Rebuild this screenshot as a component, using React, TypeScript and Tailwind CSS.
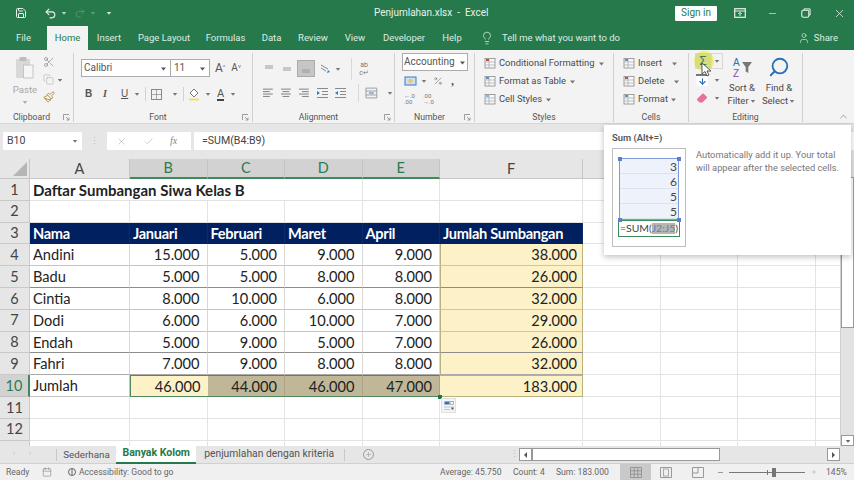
import React from "react";
import { Scissors, Copy, Paintbrush, Lightbulb, User, Search, Save, Undo2, Redo2, X, Check, Minus, ChevronUp, Plus, Percent, Eraser, ArrowDown, Calendar } from "lucide-react";

const ui = { fontFamily: 'Roboto,"Open Sans",sans-serif' };
const cal = { fontFamily: 'Lato,"Liberation Sans",sans-serif' };

const Chev = ({ c = "text-[#777]", s = 9 }: { c?: string; s?: number }) => (
  <svg width={s} height={s} viewBox="0 0 9 9" className={c + " shrink-0"}><path d="M2 3.5h5L4.5 6.5z" fill="currentColor" /></svg>
);
const Launcher = () => (
  <svg width="7" height="7" viewBox="0 0 7 7" className="text-[#888]"><path d="M.5 6V.5H6M3 3l3 3M6 3.5V6H3.5" fill="none" stroke="currentColor" strokeWidth=".8" /></svg>
);
const Lines = ({ kind }: { kind: "l" | "c" | "r" }) => {
  const w = [10, 7, 10, 7];
  return (
    <svg width="12" height="12" viewBox="0 0 12 12" className="text-[#8a8a8a]">
      {w.map((x, i) => {
        const x0 = kind === "l" ? 1 : kind === "c" ? 6 - x / 2 : 11 - x;
        return <rect key={i} x={x0} y={1.5 + i * 2.5} width={x} height="1.1" fill="currentColor" />;
      })}
    </svg>
  );
};
const Indent = ({ flip = false }: { flip?: boolean }) => (
  <svg width="13" height="12" viewBox="0 0 13 12" className="text-[#8a8a8a]">
    <path d="M1 1.5h11M6 4.5h6M6 7.5h6M1 10.5h11" stroke="currentColor" strokeWidth="1" />
    <path d={flip ? "M1 6l3-2v4z" : "M4 6L1 4v4z"} fill="#3b78c2" />
  </svg>
);
const VAlign = ({ y }: { y: number }) => (
  <svg width="12" height="12" viewBox="0 0 12 12" className="text-[#9a9a9a]">
    <path d={`M2 ${y}h8M2 ${y + 2}h8`} stroke="currentColor" strokeWidth="1" />
  </svg>
);
const SmallTable = ({ accent = "#c0504d" }: { accent?: string }) => (
  <svg width="13" height="13" viewBox="0 0 13 13">
    <rect x="1" y="1.5" width="10" height="9.5" fill="#f8f8f8" stroke="#8a8a8a" strokeWidth=".8" />
    <path d="M1 5h10M1 8h10M5 1.5V11" stroke="#a8a8a8" strokeWidth=".7" />
    <path d="M2 3l3 0" stroke={accent} strokeWidth="2" />
  </svg>
);

const Group = ({ w, label, launcher, children }: { w: string; label: string; launcher?: boolean; children: React.ReactNode }) => (
  <div className={w + " flex flex-col h-[69px] mt-[3px] border-r border-[#d0d0d0] shrink-0"}>
    <div className="flex-1 min-h-0">{children}</div>
    <div className="h-[9px] flex items-center text-[8.7px] leading-none text-[#555]">
      <span className="flex-1 text-center">{label}</span>
      {launcher && <span className="pr-[3px] flex"><Launcher /></span>}
    </div>
  </div>
);

const Row3 = ({ icon, text, chevGap }: { icon: React.ReactNode; text: string; chevGap: string }) => (
  <div className="h-[18px] flex items-center text-[9.4px] text-[#4a4a4a] leading-none">
    <span className="w-[14px] flex justify-center shrink-0">{icon}</span>
    <span className="ml-[2px] whitespace-nowrap">{text}</span>
    <span className={chevGap}><Chev /></span>
  </div>
);

const COLS = ["A", "B", "C", "D", "E", "F", "", "", "", ""];
const DATA: [string, string, string, string, string, string][] = [
  ["Andini", "15.000", "5.000", "9.000", "9.000", "38.000"],
  ["Badu", "5.000", "5.000", "8.000", "8.000", "26.000"],
  ["Cintia", "8.000", "10.000", "6.000", "8.000", "32.000"],
  ["Dodi", "6.000", "6.000", "10.000", "7.000", "29.000"],
  ["Endah", "5.000", "9.000", "5.000", "7.000", "26.000"],
  ["Fahri", "7.000", "9.000", "8.000", "8.000", "32.000"],
  ["Jumlah", "46.000", "44.000", "46.000", "47.000", "183.000"],
];
const HEAD = ["Nama", "Januari", "Februari", "Maret", "April", "Jumlah Sumbangan"];

function sheetCell(r: number, c: number) {
  const base = "min-w-0 whitespace-nowrap flex items-center pt-[2px] text-[14.6px] leading-none text-[#222] ";
  const grid = "border-r border-b border-[#e3e3e3] ";
  if (r === 1 && c === 0)
    return <div key={c} className={base + "border-b border-[#e3e3e3] pl-[3px] font-bold text-[15px] text-[#1a1a1a] overflow-visible"}>Daftar Sumbangan Siwa Kelas B</div>;
  if (r === 1 && c > 0 && c < 3) return <div key={c} className="border-b border-[#e3e3e3]" />;
  if (r === 3 && c < 6)
    return <div key={c} className={base + "bg-[#002060] text-white font-bold pl-[3px] tracking-[-0.3px] border-r border-[#0d2b66]"}>{HEAD[c]}</div>;
  if (r >= 4 && r <= 10 && c < 6) {
    const row = DATA[r - 4];
    const lineB = r === 5 || r === 8 ? "border-b border-[#8c8c8c] " : r === 9 ? "border-b border-[#aaa] " : "border-b border-[#c4c4c4] ";
    if (r === 10) {
      if (c === 0) return <div key={c} className={base + "pl-[3px] border-r border-b border-[#c4c4c4] bg-white"}>{row[c]}</div>;
      if (c === 1) return <div key={c} className={base + "justify-end pr-[7px] bg-[#fdf1c8] border-y border-l border-[#4f8a5f]"}>{row[c]}</div>;
      if (c < 5) return <div key={c} className={base + "justify-end pr-[7px] bg-[#bfb797] border-y border-r border-y-[#4f8a5f] border-r-[#aaa38a]"}>{row[c]}</div>;
      return <div key={c} className={base + "justify-end pr-[5px] bg-[#fdf1c8] border-y border-r border-y-[#b9b27e] border-r-[#b9b27e]"}>{row[c]}</div>;
    }
    if (c === 0) return <div key={c} className={base + lineB + "pl-[3px] border-r border-r-[#d8d8d8]"}>{row[c]}</div>;
    if (c === 5) return <div key={c} className={base + lineB + "justify-end pr-[5px] bg-[#fdf1c8] border-x border-x-[#b9b27e]"}>{row[c]}</div>;
    return <div key={c} className={base + lineB + "justify-end pr-[7px] border-r border-r-[#d8d8d8]"}>{row[c]}</div>;
  }
  return <div key={c} className={grid} />;
}

export default function App() {
  return (
    <div style={ui} className="w-[854px] h-[480px] overflow-hidden relative flex flex-col bg-[#e6e6e6] text-[#444]">
      {/* title bar */}
      <div className="h-[26px] bg-[#25794a] flex items-center text-[#e9f2ec] shrink-0">
        <span className="ml-[15px] flex"><Save size={12} strokeWidth={2} /></span>
        <span className="ml-[17px] flex"><Undo2 size={13} strokeWidth={2} /></span>
        <span className="ml-[3px] flex"><Chev c="text-[#b9d3c4]" s={8} /></span>
        <span className="ml-[6px] flex"><Redo2 size={12} strokeWidth={1.5} className="text-[#5d9c78]" /></span>
        <span className="ml-[3px] flex"><Chev c="text-[#5d9c78]" s={8} /></span>
        <span className="ml-[8px] flex"><Chev c="text-[#d2e3d9]" s={8} /></span>
        <span className="ml-[261px] w-[108px] whitespace-nowrap text-[10px] leading-none">Penjumlahan.xlsx&nbsp; -&nbsp; Excel</span>
        <span className="ml-[193px] w-[42px] h-[15px] bg-white text-[#25794a] rounded-[1px] flex items-center justify-center text-[10px] leading-none">Sign in</span>
        <svg width="12" height="10" viewBox="0 0 12 10" className="ml-[17px]"><rect x=".7" y=".7" width="10.6" height="8.6" fill="none" stroke="currentColor" strokeWidth="1.2" /><path d="M.7 3h10.6M6 8V4.5M4.3 6L6 4.3 7.7 6" fill="none" stroke="currentColor" /></svg>
        <span className="ml-[21px] flex"><Minus size={11} strokeWidth={1.4} /></span>
        <svg width="10" height="10" viewBox="0 0 10 10" className="ml-[23px]"><rect x=".8" y="2.2" width="7" height="7" rx="1.5" fill="none" stroke="currentColor" strokeWidth="1.1" /><path d="M3 2V.9h6.1V7H8" fill="none" stroke="currentColor" strokeWidth="1" /></svg>
        <span className="ml-[22px] flex"><X size={13} strokeWidth={1.4} /></span>
      </div>
      {/* tabs */}
      <div className="h-[24px] bg-[#25794a] flex items-center text-[#dfece4] text-[9.5px] leading-none shrink-0">
        {([["File", "w-[47px]"], ["Home", ""], ["Insert", "w-[42px]"], ["Page Layout", "w-[68px]"], ["Formulas", "w-[55px]"], ["Data", "w-[37px]"], ["Review", "w-[46px]"], ["View", "w-[38px]"], ["Developer", "w-[60px]"], ["Help", "w-[36px]"]] as [string, string][]).map(([t, w]) =>
          t === "Home" ? (
            <div key={t} className="w-[41px] h-[24px] bg-[#f3f3f3] text-[#25794a] flex items-center justify-center">{t}</div>
          ) : (
            <div key={t} className={w + " text-center whitespace-nowrap"}>{t}</div>
          )
        )}
        <span className="ml-[10px] flex"><Lightbulb size={14} strokeWidth={1.3} /></span>
        <span className="ml-[8px] whitespace-nowrap">Tell me what you want to do</span>
        <span className="flex-1" />
        <span className="flex"><User size={12} strokeWidth={1.3} /></span>
        <span className="ml-[4px] mr-[16px]">Share</span>
      </div>
      {/* ribbon */}
      <div className="h-[74px] bg-[#f3f3f3] flex shrink-0 border-b border-[#d6d6d6] relative">
        <Group w="w-[74px]" label="Clipboard" launcher>
          <div className="flex pl-[11px] pt-[3px]">
            <div className="w-[28px] flex flex-col items-center text-[#a8a8a8]">
              <svg width="20" height="23" viewBox="0 0 20 23"><rect x="1" y="3" width="14" height="19" rx="1" fill="#d8d8d8" /><rect x="4.5" y="1" width="7" height="4" rx="1" fill="#bdbdbd" /><path d="M8.5 9h9.5v13H8.5z" fill="#f6f6f6" stroke="#c4c4c4" /></svg>
              <span className="text-[9.6px] leading-none mt-[6px]">Paste</span>
              <span className="mt-[3px] flex"><Chev c="text-[#aaa]" s={8} /></span>
            </div>
            <div className="flex flex-col ml-[4px] gap-[4px]">
              <span className="flex"><Scissors size={12} strokeWidth={1.3} className="text-[#7d8693]" /></span>
              <span className="flex items-center mt-[2px]"><Copy size={11} strokeWidth={1.1} className="text-[#a6a6a6]" /><span className="ml-[2px]"><Chev s={8} /></span></span>
              <span className="flex mt-[2px]"><Paintbrush size={12} strokeWidth={1.8} className="text-[#b3873d]" /></span>
            </div>
          </div>
        </Group>
        <Group w="w-[179px]" label="Font" launcher>
          <div className="pl-[7px] pt-[6px] flex items-center">
            <div className="w-[90px] h-[18px] bg-white border border-[#ababab] flex items-center justify-between px-[2px] text-[10px] leading-none text-[#555]"><span>Calibri</span><Chev c="text-[#555]" /></div>
            <div className="w-[39px] h-[18px] bg-white border border-[#ababab] border-l-0 flex items-center justify-between pl-[3px] pr-[2px] text-[10px] leading-none text-[#555]"><span>11</span><Chev c="text-[#555]" /></div>
            <span className="ml-[5px] text-[12px] leading-none text-[#555]">A<sup className="text-[6px] text-[#3b78c2]">^</sup></span>
            <span className="ml-[6px] text-[10px] leading-none text-[#555]">A<sup className="text-[6px] text-[#3b78c2]">v</sup></span>
          </div>
          <div className="pl-[11px] pt-[8px] flex items-center text-[#555] h-[26px]">
            <b className="text-[10px] w-[18px] leading-none" style={{ fontFamily: '"Liberation Sans"' }}>B</b>
            <i className="text-[10px] w-[18px] leading-none font-bold" style={{ fontFamily: '"Liberation Serif"' }}>I</i>
            <u className="text-[10px] w-[12px] leading-none" style={{ fontFamily: '"Liberation Sans"' }}>U</u>
            <Chev s={8} />
            <span className="w-px h-[14px] bg-[#d2d2d2] ml-[4px]" />
            <svg width="11" height="11" viewBox="0 0 11 11" className="ml-[5px] text-[#888]"><rect x=".5" y=".5" width="10" height="10" fill="none" stroke="currentColor" /><path d="M5.5 0v11M0 5.5h11" stroke="currentColor" strokeWidth=".7" /></svg>
            <span className="ml-[9px] flex"><Chev s={8} /></span>
            <span className="w-px h-[14px] bg-[#d2d2d2] ml-[4px]" />
            <svg width="12" height="14" viewBox="0 0 12 14" className="ml-[4px]"><path d="M2 6l4-4 4 4-4 4z" fill="#fff" stroke="#777" /><path d="M1 12.5h10" stroke="#f3dc6b" strokeWidth="2" /></svg>
            <span className="ml-[4px] flex"><Chev s={8} /></span>
            <span className="ml-[5px] text-[11px] leading-none border-b-2 border-[#444]">A</span>
            <span className="ml-[5px] flex"><Chev s={8} /></span>
          </div>
        </Group>
        <Group w="w-[142px]" label="Alignment" launcher>
          <div className="flex items-center h-[27px] pt-[4px] pl-[10px]">
            <VAlign y={3} />
            <span className="ml-[6px] flex"><VAlign y={5} /></span>
            <span className="ml-[4px] w-[18px] h-[17px] bg-[#c6c6c6] border border-[#ababab] flex items-center justify-center"><VAlign y={7} /></span>
            <svg width="12" height="12" viewBox="0 0 12 12" className="ml-[4px]"><path d="M2 2l7 4M2 5l5 3" stroke="#888" /><path d="M8 10l3-1-2-2z" fill="#3b78c2" /></svg>
            <span className="ml-[3px] flex"><Chev s={8} /></span>
            <span className="w-px h-[22px] bg-[#d8d8d8] ml-[9px]" />
            <span className="ml-[6px] text-[7px] leading-[8px] text-[#777] w-[12px] text-center">ab<br />c↵</span>
          </div>
          <div className="flex items-center pl-[9px] h-[24px] gap-[6px] mt-px">
            <Lines kind="l" />
            <Lines kind="c" />
            <Lines kind="r" />
            <span className="ml-px flex gap-[5px]"><Indent /><Indent flip /></span>
            <span className="w-px h-[18px] bg-[#d8d8d8] ml-[5px]" />
            <svg width="13" height="12" viewBox="0 0 13 12" className="text-[#8a8a8a]"><path d="M1 1h11v10H1zM1 4h11M1 8h11" fill="none" stroke="currentColor" strokeWidth=".8" /><path d="M4 6h5" stroke="#3b78c2" /></svg>
            <span className="ml-[2px] flex"><Chev s={8} /></span>
          </div>
        </Group>
        <Group w="w-[80px]" label="Number" launcher>
          <div className="pl-[7px]">
            <div className="w-[66px] h-[18px] bg-white border border-[#ababab] flex items-center justify-between pl-[1px] text-[10px] leading-none text-[#555]"><span>Accounting</span><Chev c="text-[#555]" /></div>
          </div>
          <div className="flex items-center pl-[9px] h-[18px] mt-[1px]">
            <svg width="13" height="12" viewBox="0 0 13 12"><rect x="1" y="2" width="11" height="8" fill="#cfe0f2" stroke="#3b78c2" /><circle cx="6.5" cy="6" r="2.2" fill="#e8c86b" /></svg>
            <span className="ml-[3px] flex"><Chev s={8} /></span>
            <span className="ml-[5px] text-[#777] flex"><Percent size={10} strokeWidth={1.5} /></span>
            <span className="ml-[8px] text-[12px] leading-none font-bold text-[#555]" style={{ fontFamily: '"Liberation Serif"' }}>,</span>
          </div>
          <div className="flex items-center pl-[9px] h-[18px] text-[6px] leading-[6px] text-[#777]">
            <span className="w-[19px]"><span className="text-[#3b78c2]">←</span>.0<br />.00</span>
            <span>.00<br /><span className="text-[#3b78c2]">→</span>.0</span>
          </div>
        </Group>
        <Group w="w-[139px]" label="Styles">
          <div className="pl-[8px] pt-px">
            <Row3 icon={<SmallTable />} text="Conditional Formatting" chevGap="ml-[2px]" />
            <Row3 icon={<SmallTable accent="#5b8fc9" />} text="Format as Table" chevGap="ml-[2px]" />
            <Row3 icon={<SmallTable accent="#8fb1d6" />} text="Cell Styles" chevGap="ml-[2px]" />
          </div>
        </Group>
        <Group w="w-[75px]" label="Cells">
          <div className="pl-[8px] pt-px">
            <Row3 icon={<SmallTable accent="#5b8fc9" />} text="Insert" chevGap="ml-[8px]" />
            <Row3 icon={<SmallTable />} text="Delete" chevGap="ml-[8px]" />
            <Row3 icon={<SmallTable accent="#5b8fc9" />} text="Format" chevGap="ml-[1px]" />
          </div>
        </Group>
        <Group w="w-[114px]" label="Editing">
          <div className="flex pl-[6px]">
            <div className="w-[28px] flex flex-col">
              <div className="flex h-[17px] relative">
                <span className="absolute left-[-1px] top-[-2px] w-[20px] h-[20px] rounded-full bg-[#eef06a]" />
                <span className="relative w-[16px] h-[16px] bg-[#c9cf8b]/60 text-[#3d7c4f] text-[12px] leading-[16px] text-center" style={{ fontFamily: '"Liberation Sans"' }}>Σ</span>
                <span className="relative w-[12px] h-[16px] border border-[#d8d8d8] flex items-center justify-center"><Chev s={8} /></span>
              </div>
              <div className="flex items-center h-[18px] mt-px pl-[1px]">
                <span className="w-[12px] h-[12px] border-t-2 border-[#777] bg-white flex items-center justify-center text-[#2e6fc0]"><ArrowDown size={9} strokeWidth={3} /></span>
                <span className="ml-[5px] flex"><Chev s={8} /></span>
              </div>
              <div className="flex items-center h-[18px] pl-[1px]">
                <Eraser size={12} strokeWidth={0} fill="#e8709a" />
                <span className="ml-[5px] flex"><Chev s={8} /></span>
              </div>
            </div>
            <div className="ml-px w-[36px] flex flex-col items-center text-[9.5px] leading-[12.5px] text-[#4a4a4a] text-center">
              <svg width="21" height="21" viewBox="0 0 21 21" className="mt-[4px] mb-[4px]">
                <text x="1" y="9" fontSize="10" fill="#2e6fc0" fontFamily="Liberation Sans">A</text>
                <text x="1" y="19.5" fontSize="10" fill="#8a4db0" fontFamily="Liberation Sans">Z</text>
                <path d="M10 5h10l-3.7 5v6l-2.6-1.4V10z" fill="#777" />
              </svg>
              <span>Sort &amp;</span>
              <span className="flex items-center whitespace-nowrap">Filter<Chev s={8} /></span>
            </div>
            <div className="w-[38px] flex flex-col items-center text-[9.5px] leading-[12.5px] text-[#4a4a4a] text-center">
              <Search size={22} strokeWidth={2} className="mt-[3px] mb-[4px] text-[#2a6fb5] -scale-x-100" />
              <span>Find &amp;</span>
              <span className="flex items-center whitespace-nowrap">Select<Chev s={8} /></span>
            </div>
          </div>
        </Group>
        <div className="flex-1 flex items-end justify-end pr-[5px] pb-[1px] text-[#777]"><ChevronUp size={11} strokeWidth={1.5} /></div>
      </div>
      {/* formula bar */}
      <div className="h-[35px] shrink-0 flex pt-[8px] pb-[9px] text-[10.6px] leading-none">
        <div className="ml-[3px] w-[79px] bg-white flex items-center justify-between pl-[4px] pr-[3px] text-[#444]"><span>B10</span><Chev s={8} /></div>
        <div className="w-[25px] flex items-center justify-center text-[#bbb] tracking-tighter text-[9px]">⋮</div>
        <div className="w-[84px] bg-white flex items-center text-[#aaa]">
          <span className="ml-[9px] flex"><X size={11} strokeWidth={1.2} /></span>
          <span className="ml-[16px] flex"><Check size={11} strokeWidth={1.2} /></span>
          <span className="ml-[16px] italic text-[#888] text-[10px]" style={{ fontFamily: '"Liberation Serif"' }}>fx</span>
        </div>
        <div className="ml-[3px] flex-1 bg-white flex items-center pl-[8px] text-[#444]">=SUM(B4:B9)</div>
      </div>
      {/* sheet */}
      <div className="flex-1 min-h-0 flex bg-white relative" style={cal}>
        <div className="flex-1 min-w-0 overflow-hidden grid grid-cols-[30px_100px_77.5px_77.5px_77.5px_77.5px_143px_77.5px_77.5px_77.5px_25px] grid-rows-[20px_repeat(13,21.8px)] items-stretch">
          <div className="bg-[#e6e6e6] border-r border-b border-[#c6c6c6] flex items-end justify-end pr-[2px] pb-[2px]">
            <span className="w-0 h-0 border-l-[14px] border-l-transparent border-b-[14px] border-b-[#b5b5b5]" />
          </div>
          {COLS.map((c, i) => {
            const sel = i >= 1 && i <= 4;
            return (
              <div key={i} className={sel ? "bg-[#d2d2d2] border-b-2 border-[#3f8a5b] border-r border-r-[#c4c4c4] text-[#2f7a4d] flex items-center justify-center pt-px text-[14.5px] leading-none" : "bg-[#e6e6e6] border-r border-b border-[#c6c6c6] text-[#444] flex items-center justify-center pt-px text-[14.5px] leading-none"}>{c}</div>
            );
          })}
          {Array.from({ length: 13 }, (_, k) => k + 1).map((r) => (
            <React.Fragment key={r}>
              <div className={r === 10 ? "bg-[#d2d2d2] text-[#2f7a4d] border-b border-r-2 border-[#c0c0c0] border-r-[#3f8a5b] flex items-center justify-center pt-px text-[14.5px] leading-none" : "bg-[#e6e6e6] text-[#444] border-b border-r border-[#c9c9c9] flex items-center justify-center pt-px text-[14.5px] leading-none"}>{r === 13 ? "" : r}</div>
              {Array.from({ length: 10 }, (_, c) => sheetCell(r, c))}
            </React.Fragment>
          ))}
        </div>
        <div className="w-[14px] shrink-0 bg-[#e2e2e2] flex flex-col border-l border-[#d0d0d0]">
          <div className="h-[151px] mt-[18px] bg-white border border-[#9a9a9a]" />
          <div className="flex-1" />
          <div className="h-[11px] bg-white border border-[#9a9a9a] flex items-center justify-center"><Chev c="text-[#666]" s={8} /></div>
        </div>
        {/* fill handle + quick analysis */}
        <span className="absolute left-[438px] top-[236px] w-[4px] h-[4px] bg-[#217346] border-0" />
        <div className="absolute left-[441px] top-[239px] w-[15px] h-[15px] bg-[#f4f4f4] border border-[#e0e0e0] flex items-center justify-center">
          <svg width="10" height="10" viewBox="0 0 10 10"><rect x=".5" y=".5" width="5" height="3" fill="#2e6fc0" /><rect x="6" y=".5" width="3.5" height="3" fill="none" stroke="#888" strokeWidth=".6" /><path d="M.5 6h9M.5 8.5h6" stroke="#999" strokeDasharray="1 1" /><rect x="7.5" y="6.5" width="2" height="2" fill="#555" /></svg>
        </div>
      </div>
      {/* sheet tabs */}
      <div className="h-[18px] shrink-0 flex items-center bg-[#e6e6e6] text-[9.8px] leading-none text-[#555] border-b border-[#d0d0d0]">
        <span className="ml-[13px] text-[7px] text-[#bbb]">‹</span>
        <span className="ml-[14px] text-[7px] text-[#bbb]">›</span>
        <span className="w-px h-[12px] bg-[#c8c8c8] ml-[25px]" />
        <span className="ml-[6px] w-[46px] whitespace-nowrap">Sederhana</span>
        <span className="ml-[7px] w-[80px] h-[18px] bg-white text-[#25794a] text-[10.5px] font-bold border-b-2 border-[#25794a] flex items-center justify-center whitespace-nowrap">Banyak Kolom</span>
        <span className="ml-[8px] w-[132px] text-[10.3px] whitespace-nowrap">penjumlahan dengan kriteria</span>
        <span className="w-px h-[12px] bg-[#c8c8c8] ml-[8px]" />
        <span className="ml-[18px] w-[11px] h-[11px] rounded-full border border-[#999] flex items-center justify-center text-[#888]"><Plus size={7} strokeWidth={1.5} /></span>
        <span className="ml-[136px] w-[5px] text-[#bbb] text-[9px]">⋮</span>
        <div className="ml-[4px] w-[13px] h-[13px] bg-white border border-[#999] flex items-center justify-center"><span className="w-0 h-0 border-y-[3px] border-y-transparent border-r-[3px] border-r-[#555]" /></div>
        <div className="w-[188px] h-[13px] bg-white border border-[#999]" />
        <div className="flex-1 h-[13px]" />
        <div className="w-[13px] h-[13px] bg-white border border-[#999] flex items-center justify-center mr-[14px]"><span className="w-0 h-0 border-y-[3px] border-y-transparent border-l-[3px] border-l-[#555]" /></div>
      </div>
      {/* status */}
      <div className="h-[16px] shrink-0 flex items-center bg-[#f0f0f0] text-[8.6px] leading-none text-[#666]">
        <span className="ml-[6px] w-[32px]">Ready</span>
        <span className="ml-[4px] flex text-[#888]"><Calendar size={10} strokeWidth={1.5} /></span>
        <svg width="10" height="10" viewBox="0 0 10 10" className="ml-[15px] text-[#666]"><circle cx="5" cy="5" r="3.5" fill="none" stroke="currentColor" /><path d="M5 2v6" stroke="currentColor" /></svg>
        <span className="ml-[2px] w-[91px] whitespace-nowrap">Accessibility: Good to go</span>
        <span className="ml-[270px] w-[73px] whitespace-nowrap">Average: 45.750</span>
        <span className="w-[43px] whitespace-nowrap">Count: 4</span>
        <span className="w-[64px] whitespace-nowrap">Sum: 183.000</span>
        <span className="w-[31px] h-[16px] bg-[#c9c9c9] flex items-center justify-center">
          <svg width="12" height="11" viewBox="0 0 12 11" className="text-[#8a8a8a]"><path d="M.5.5h11v10H.5zM4.2.5v10M7.8.5v10M.5 3.8h11M.5 7.2h11" fill="none" stroke="currentColor" strokeWidth=".8" /></svg>
        </span>
        <svg width="12" height="11" viewBox="0 0 12 11" className="ml-[9px] text-[#999]"><path d="M.5.5h11v10H.5z" fill="none" stroke="currentColor" /><rect x="3.5" y="2" width="5" height="7" fill="none" stroke="currentColor" strokeWidth=".8" /></svg>
        <svg width="12" height="11" viewBox="0 0 12 11" className="ml-[20px] text-[#999]"><path d="M.5.5h11v10H.5zM6 .5V6H.5" fill="none" stroke="currentColor" /></svg>
        <span className="ml-[14px] w-[5px] h-px bg-[#999]" />
        <div className="ml-[6px] w-[76px] h-px bg-[#777] flex items-center">
          <span className="ml-[38px] w-px h-[5px] bg-[#777]" />
          <span className="ml-[4px] w-[4px] h-[9px] bg-[#777]" />
        </div>
        <span className="ml-[6px] text-[#999] flex"><Plus size={6} strokeWidth={1.5} /></span>
        <span className="ml-[9px] w-[22px] whitespace-nowrap">145%</span>
      </div>
      {/* tooltip */}
      <div className="absolute left-[604px] top-[125px] w-[247px] h-[130px] bg-white shadow-[0_2px_6px_rgba(0,0,0,0.25)] flex flex-col pl-[8px] pt-[8px]">
        <div className="text-[9.4px] leading-none font-semibold text-[#555] h-[15px]">Sum (Alt+=)</div>
        <div className="flex">
          <div className="w-[74px] h-[99px] border border-[#bdbdbd] flex flex-col px-[6px] pt-[9px] bg-white shrink-0">
            <div className="relative h-[62px] bg-[#eef2fb] border-[1.5px] border-[#7f9ad6] flex flex-col text-[12px] leading-none text-[#444] text-right" style={cal}>
              {["3", "6", "5", "5"].map((n, i) => (
                <div key={i} className="flex-1 border-b border-[#dde2ee] pr-[1px] flex items-end justify-end">{n}</div>
              ))}
              <span className="absolute -left-[2.5px] -top-[2.5px] w-[4px] h-[4px] bg-[#5b7fd0]" />
              <span className="absolute -right-[2.5px] -top-[2.5px] w-[4px] h-[4px] bg-[#5b7fd0]" />
              <span className="absolute -left-[2.5px] -bottom-[2.5px] w-[4px] h-[4px] bg-[#5b7fd0]" />
              <span className="absolute -right-[2.5px] -bottom-[2.5px] w-[4px] h-[4px] bg-[#5b7fd0]" />
            </div>
            <div className="h-[17px] -mx-px border-[1.5px] border-[#3f8a5b] flex items-center text-[10.4px] leading-none text-[#444] whitespace-nowrap pl-[1px]" style={cal}>
              =SUM(<span className="bg-[#b6b6ad] text-[#5f7dc4]">J2:J5</span>)
            </div>
          </div>
          <div className="ml-[10px] text-[9.3px] leading-[13px] text-[#777] whitespace-nowrap">Automatically add it up. Your total<br />will appear after the selected cells.</div>
        </div>
      </div>
      {/* mouse cursor */}
      <svg width="11" height="15" viewBox="0 0 11 15" className="absolute left-[701px] top-[62px]"><path d="M1 1v11l3-2.5 2 4.5 2-1-2-4h4z" fill="#fff" stroke="#444" strokeWidth=".9" /></svg>
    </div>
  );
}
